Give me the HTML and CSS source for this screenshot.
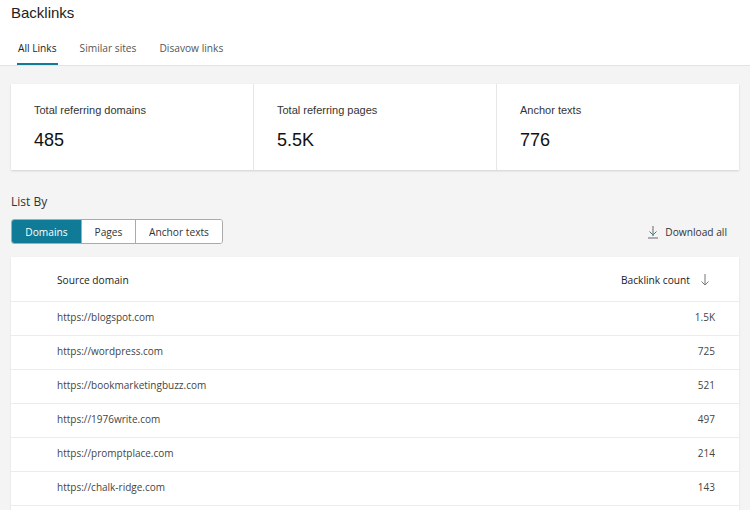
FILE: index.html
```html
<!DOCTYPE html>
<html>
<head>
<meta charset="utf-8">
<link rel="stylesheet" href="styles.css">
</head>
<body>
<header class="top">
  <h1 class="title">Backlinks</h1>
  <nav class="tabs">
    <a class="tab active">All Links</a>
    <a class="tab">Similar sites</a>
    <a class="tab">Disavow links</a>
  </nav>
</header>
<main class="main">
  <section class="stats">
    <div class="stat"><div class="stat-label">Total referring domains</div><div class="stat-value">485</div></div>
    <div class="stat"><div class="stat-label">Total referring pages</div><div class="stat-value">5.5K</div></div>
    <div class="stat"><div class="stat-label">Anchor texts</div><div class="stat-value">776</div></div>
  </section>
  <div class="listby">List By</div>
  <div class="toolbar">
    <div class="seg">
      <button class="seg-btn on">Domains</button>
      <button class="seg-btn">Pages</button>
      <button class="seg-btn">Anchor texts</button>
    </div>
    <div class="download">
      <svg width="12" height="14" viewBox="0 0 12 14"><path d="M6 1v9M2.5 6.5L6 10l3.5-3.5" fill="none" stroke="#666" stroke-width="1"/><path d="M1 13h10" stroke="#666" stroke-width="1"/><circle cx="6" cy="10" r="1" fill="#2aa3b8"/></svg>
      <span>Download all</span>
    </div>
  </div>
  <section class="table">
    <div class="row head"><span>Source domain</span><span class="sort">Backlink count <svg width="10" height="14" viewBox="0 0 10 14"><path d="M5 1v11M1.5 8.5L5 12l3.5-3.5" fill="none" stroke="#777" stroke-width="1"/></svg></span></div>
    <div class="row"><span>https://blogspot.com</span><span>1.5K</span></div>
    <div class="row"><span>https://wordpress.com</span><span>725</span></div>
    <div class="row"><span>https://bookmarketingbuzz.com</span><span>521</span></div>
    <div class="row"><span>https://1976write.com</span><span>497</span></div>
    <div class="row"><span>https://promptplace.com</span><span>214</span></div>
    <div class="row"><span>https://chalk-ridge.com</span><span>143</span></div>
    <div class="row empty"></div>
  </section>
</main>
</body>
</html>
```
FILE: styles.css
```css
* { box-sizing: border-box; }
html, body { margin: 0; padding: 0; }
body {
  background: #f4f4f4;
  font-family: "Open Sans", "Noto Sans", sans-serif;
  color: #333;
  width: 750px;
  height: 510px;
  overflow: hidden;
}
.top {
  background: #fff;
  border-bottom: 1px solid #e3e3e3;
  padding: 0 11px;
}
.title {
  margin: 0;
  padding-top: 3px;
  font-family: "Liberation Sans", Arial, sans-serif;
  font-weight: normal;
  font-size: 15px;
  line-height: 19px;
  color: #222;
}
.tabs {
  display: flex;
  margin-top: 18px;
  padding-left: 6px;
}
.tab {
  font-size: 10.2px;
  line-height: 14px;
  color: #555;
  padding: 1px 1px 8px;
  margin-right: 21px;
  border-bottom: 2px solid transparent;
}
.tab.active {
  color: #222;
  border-bottom-color: #127b94;
}
.main {
  padding: 18px 11px 0;
}
.stats {
  display: grid;
  grid-template-columns: 242px 243px 242px;
  background: #fff;
  box-shadow: 0 1px 2px rgba(0,0,0,0.15);
  height: 86px;
}
.stat {
  padding: 19px 23px 0;
  border-left: 1px solid #e6e6e6;
  font-family: "Liberation Sans", Arial, sans-serif;
}
.stat:first-child { border-left: none; }
.stat-label { font-size: 11px; line-height: 14px; color: #333; }
.stat-value { font-size: 18px; line-height: 22px; margin-top: 12px; color: #111; }
.listby {
  margin-top: 24px;
  font-size: 12px;
  line-height: 16px;
  color: #333;
}
.toolbar {
  display: flex;
  justify-content: space-between;
  align-items: center;
  margin-top: 9px;
}
.seg {
  display: flex;
  border: 1px solid #aaa;
  border-radius: 3px;
  overflow: hidden;
  height: 25px;
}
.seg-btn {
  font-family: "Open Sans", sans-serif;
  font-size: 10.2px;
  color: #333;
  background: #fff;
  border: none;
  border-left: 1px solid #aaa;
  padding: 0;
  height: 23px;
  white-space: nowrap;
  text-align: center;
}
.seg-btn:first-child { border-left: none; }
.seg-btn.on {
  background: #0f7b96;
  color: #fff;
  width: 69px;
}
.seg-btn:nth-child(2) { width: 54px; }
.seg-btn:nth-child(3) { width: 87px; }
.download {
  display: flex;
  align-items: center;
  gap: 6px;
  font-size: 10.2px;
  color: #333;
  padding-right: 12px;
}
.download svg { display: block; }
.table {
  margin-top: 13px;
  background: #fff;
  box-shadow: 0 1px 2px rgba(0,0,0,0.1);
}
.row {
  display: flex;
  justify-content: space-between;
  align-items: center;
  height: 34px;
  padding: 0 24px 3px 46px;
  border-top: 1px solid #ececec;
  font-size: 10px;
  color: #444;
}
.row.head {
  height: 44px;
  border-top: none;
  font-size: 10.2px;
  color: #222;
  padding: 2px 29px 0 46px;
}
.sort { display: flex; align-items: center; gap: 10px; }
.sort svg { display: block; }
```
